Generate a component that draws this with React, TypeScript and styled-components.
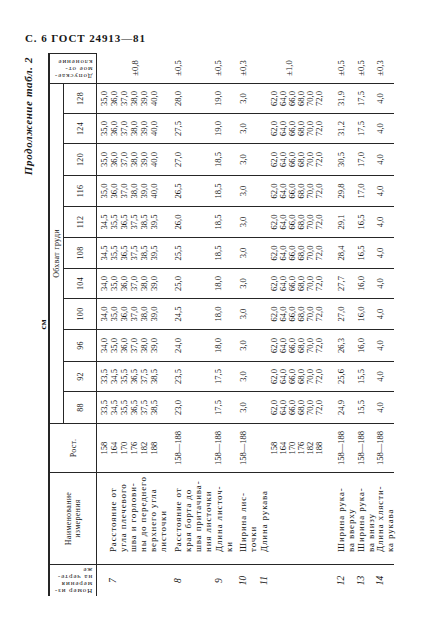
import styled, { createGlobalStyle } from 'styled-components'

const INK = '#161616'
const RULE = '#262626'

// widths of the table columns, left to right, as the table stands before it is turned
const COLS = [32, 92, 49, 32, 30, 32, 31, 30, 31, 31, 31, 32, 30, 30, 30]
const GRID = COLS.map((w) => `${w}px`).join(' ')
const SIZES = ['88', '92', '96', '100', '104', '108', '112', '116', '120', '124', '128']
const HEIGHTS = ['158', '164', '170', '176', '182', '188']
const RANGE = ['158—188']

const fmt = (n: number) => n.toFixed(1).replace('.', ',')
const stack = (start: number, step: number) =>
  Array.from({ length: 6 }, (_, i) => fmt(start + i * step))
const single = (list: number[]) => list.map((v) => [fmt(v)])
const same = (v: number) => SIZES.map(() => [fmt(v)])

interface Row {
  num: string
  name: string[]
  height: number
  namePad: number
  valuePad: number
  tolPad: number
  lh?: number
  rost: string[]
  values: string[][]
  tol: string
}

const rows: Row[] = [
  {
    num: '7',
    name: ['Расстояние от', 'угла плечевого', 'шва и горлови-', 'ны до переднего', 'верхнего угла', 'листочки'],
    height: 76,
    namePad: 11,
    valuePad: 2,
    tolPad: 33,
    rost: HEIGHTS,
    values: [33.5, 33.5, 34, 34, 34, 34.5, 34.5, 35, 35, 35, 35].map((v) => stack(v, 1)),
    tol: '±0,8',
  },
  {
    num: '8',
    name: ['Расстояние от', 'края борта до', 'шва притачива-', 'ния листочки'],
    height: 40,
    namePad: 0,
    valuePad: 0,
    tolPad: 0,
    rost: RANGE,
    values: single([23, 23.5, 24, 24.5, 25, 25.5, 26, 26.5, 27, 27.5, 28]),
    tol: '±0,5',
  },
  {
    num: '9',
    name: ['Длина листоч-', 'ки'],
    height: 25,
    namePad: 1,
    valuePad: 0,
    tolPad: 0,
    rost: RANGE,
    values: single([17.5, 17.5, 18, 18, 18, 18.5, 18.5, 18.5, 18.5, 19, 19]),
    tol: '±0,5',
  },
  {
    num: '10',
    name: ['Ширина лис-', 'точки'],
    height: 20,
    namePad: 0,
    valuePad: 0,
    tolPad: 0,
    rost: RANGE,
    values: same(3),
    tol: '±0,3',
  },
  {
    num: '11',
    name: ['Длина рукава'],
    height: 78,
    namePad: 1,
    valuePad: 12,
    tolPad: 26,
    lh: 9,
    rost: HEIGHTS,
    values: SIZES.map(() => stack(62, 2)),
    tol: '±1,0',
  },
  {
    num: '12',
    name: ['Ширина рука-', 'ва вверху'],
    height: 20,
    namePad: 0,
    valuePad: 0,
    tolPad: 0,
    rost: RANGE,
    values: single([24.9, 25.6, 26.3, 27, 27.7, 28.4, 29.1, 29.8, 30.5, 31.2, 31.9]),
    tol: '±0,5',
  },
  {
    num: '13',
    name: ['Ширина рука-', 'ва внизу'],
    height: 19,
    namePad: 0,
    valuePad: 0,
    tolPad: 0,
    rost: RANGE,
    values: single([15.5, 15.5, 16, 16, 16, 16.5, 16.5, 17, 17, 17.5, 17.5]),
    tol: '±0,5',
  },
  {
    num: '14',
    name: ['Длина хлясти-', 'ка рукава'],
    height: 19,
    namePad: 0,
    valuePad: 0,
    tolPad: 0,
    rost: RANGE,
    values: same(4),
    tol: '±0,3',
  },
]

const GlobalStyle = createGlobalStyle`
  * { box-sizing: border-box; }
  html, body { margin: 0; padding: 0; background: #fff; }
`

const Page = styled.div`
  width: 424px;
  height: 632px;
  overflow: hidden;
  background: #fff;
  color: ${INK};
  font-family: 'Liberation Serif', 'Times New Roman', serif;
`
const Folio = styled.div`
  height: 53px;
  padding: 32px 0 0 25px;
  font-size: 11px;
  font-weight: bold;
  line-height: 12px;
  letter-spacing: 0.9px;
`
const Stage = styled.div`
  margin-left: 21px;
  width: 373px;
  height: 543px;
`
// the table is printed across the page, so it is built upright and turned a quarter left
const Turned = styled.div`
  width: 543px;
  height: 373px;
  display: flex;
  flex-direction: column;
  transform-origin: 0 0;
  transform: translateY(543px) rotate(-90deg);
`
const Caption = styled.div`
  height: 14px;
  line-height: 14px;
  padding-right: 4px;
  text-align: right;
  font-size: 11px;
  font-style: italic;
  font-weight: bold;
  letter-spacing: 0.6px;
`
const Units = styled.div`
  height: 13px;
  line-height: 17px;
  text-align: center;
  font-size: 9px;
  font-weight: bold;
`
const Table = styled.div`
  border-top: 2px solid ${RULE};
`
const Head = styled.div`
  display: grid;
  grid-template-columns: ${GRID};
  grid-template-rows: 14px 32px;
  border-bottom: 1px solid ${RULE};
`
const HeadCell = styled.div<{ $col: string; $row: string; $under?: boolean }>`
  grid-column: ${(p) => p.$col};
  grid-row: ${(p) => p.$row};
  display: flex;
  align-items: center;
  justify-content: center;
  text-align: center;
  font-size: 8px;
  line-height: 9px;
  letter-spacing: 0.3px;
  border-right: 1px solid ${RULE};
  border-bottom: ${(p) => (p.$under ? `1px solid ${RULE}` : 'none')};
`
const SideText = styled.div`
  writing-mode: vertical-rl;
  transform: rotate(180deg);
  text-align: start;
  white-space: nowrap;
  font-size: 7px;
  line-height: 7px;
  letter-spacing: 0.9px;
`
const Body = styled.div<{ $rows: string }>`
  display: grid;
  grid-template-columns: ${GRID};
  grid-template-rows: ${(p) => p.$rows};
`
const Cell = styled.div<{ $pad: number; $lh?: number; $edge?: boolean }>`
  padding-top: ${(p) => p.$pad}px;
  border-right: ${(p) => (p.$edge ? 'none' : `1px solid ${RULE}`)};
  text-align: center;
  font-size: 8.5px;
  line-height: ${(p) => p.$lh ?? 10}px;
  white-space: nowrap;
`
const NumCell = styled(Cell)`
  font-size: 9.5px;
  font-style: italic;
`
const NameCell = styled(Cell)`
  padding-left: 12px;
  text-align: left;
  font-size: 9px;
  letter-spacing: 0.85px;
`
const Line = styled.div``

const Lines = ({ items }: { items: string[] }) => (
  <>
    {items.map((t, i) => (
      <Line key={i}>{t}</Line>
    ))}
  </>
)

export default function App() {
  return (
    <Page>
      <GlobalStyle />
      <Folio>С. 6 ГОСТ 24913—81</Folio>
      <Stage>
        <Turned>
          <Caption>Продолжение табл. 2</Caption>
          <Units>см</Units>
          <Table>
            <Head>
              <HeadCell $col="1" $row="1 / 3">
                <SideText>
                  Номер из-
                  <br />
                  мерения
                  <br />
                  на черте-
                  <br />
                  же
                </SideText>
              </HeadCell>
              <HeadCell $col="2" $row="1 / 3">
                Наименование
                <br />
                измерения
              </HeadCell>
              <HeadCell $col="3" $row="1 / 3">
                Рост.
              </HeadCell>
              <HeadCell $col="4 / 15" $row="1" $under>
                Обхват груди
              </HeadCell>
              {SIZES.map((s, i) => (
                <HeadCell key={s} $col={`${i + 4}`} $row="2">
                  {s}
                </HeadCell>
              ))}
              <HeadCell $col="15" $row="1 / 3">
                <SideText>
                  Допускае-
                  <br />
                  мое от-
                  <br />
                  клонение
                </SideText>
              </HeadCell>
            </Head>
            <Body $rows={rows.map((r) => `${r.height}px`).join(' ')}>
              {rows.map((r) => [
                <NumCell key={`${r.num}-n`} $pad={r.namePad}>
                  {r.num}
                </NumCell>,
                <NameCell key={`${r.num}-t`} $pad={r.namePad}>
                  <Lines items={r.name} />
                </NameCell>,
                <Cell key={`${r.num}-r`} $pad={r.valuePad} $lh={r.lh}>
                  <Lines items={r.rost} />
                </Cell>,
                ...r.values.map((v, i) => (
                  <Cell key={`${r.num}-${i}`} $pad={r.valuePad} $lh={r.lh}>
                    <Lines items={v} />
                  </Cell>
                )),
                <Cell key={`${r.num}-d`} $pad={r.tolPad} $edge>
                  {r.tol}
                </Cell>,
              ])}
            </Body>
          </Table>
        </Turned>
      </Stage>
    </Page>
  )
}
